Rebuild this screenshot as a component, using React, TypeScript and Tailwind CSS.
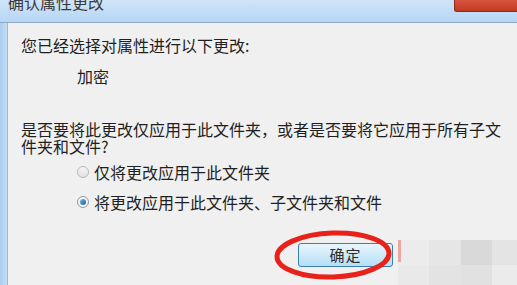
export default function App() {
  return (
    <div
      className="relative w-[517px] h-[285px] overflow-hidden bg-[#f0f0f0] text-[#1f1f1f]"
      style={{ fontFamily: '"Noto Sans CJK SC", "Noto Sans", sans-serif' }}
    >
      {/* Title bar */}
      <div className="relative h-[23px] bg-gradient-to-b from-[#cfe4f8] to-[#b7d6f6] border-b border-[#8faac6] overflow-hidden">
        <div className="pl-[8px] -mt-[9px] text-[16px] leading-[22px] text-[#3a3a3a] whitespace-nowrap">确认属性更改</div>
        <div className="absolute right-0 top-0 w-[63px] h-[12px] rounded-bl-[3px] bg-gradient-to-b from-[#d8543f] to-[#c23a22] border-l border-b border-[#8a2a1c]" />
      </div>

      {/* Window body */}
      <div className="flex h-[262px]">
        <div className="w-[8px] h-full bg-gradient-to-r from-[#a9cbef] to-[#c7def5] border-r border-[#9fb6cf]" />
        <div className="flex-1 pl-[13px] pt-[12px] text-[16px] leading-[20px]">
          <div className="whitespace-nowrap">您已经选择对属性进行以下更改:</div>
          <div className="mt-[11px] pl-[56px]">加密</div>

          <div className="mt-[35px] leading-[17px] whitespace-nowrap">
            <div>是否要将此更改仅应用于此文件夹，或者是否要将它应用于所有子文</div>
            <div>件夹和文件?</div>
          </div>

          <div className="mt-[7px] pl-[56px] flex flex-col gap-[10px]">
            <div className="flex items-center gap-[5px]">
              <span className="w-[12px] h-[12px] rounded-full border border-[#b8b8b8] bg-gradient-to-b from-[#f4f4f4] to-[#e2e2e2]" />
              <span>仅将更改应用于此文件夹</span>
            </div>
            <div className="flex items-center gap-[5px]">
              <span className="w-[12px] h-[12px] rounded-full border border-[#8d9aa6] bg-[#f6f6f6] flex items-center justify-center">
                <span className="w-[6px] h-[6px] rounded-full bg-gradient-to-br from-[#6cc0ec] to-[#1b5d8f]" />
              </span>
              <span>将更改应用于此文件夹、子文件夹和文件</span>
            </div>
          </div>

          <div className="mt-[31px] flex">
            <div className="ml-[277px] w-[95px] h-[24px] border border-[#3c7fb1] rounded-[3px] bg-gradient-to-b from-[#eaf6fd] to-[#b4def8] flex items-center justify-center text-[15px] text-[#2b2b2b] tracking-[1px]">
              确定
            </div>
          </div>
        </div>
      </div>

      {/* Blurred region */}
      <div className="absolute left-[398px] top-[240px] w-[125px] h-[50px] rounded-[6px] bg-[#eaeaea] grid grid-cols-4 grid-rows-2 overflow-hidden">
        <div className="bg-[#ececec]" />
        <div className="bg-[#e6e6e6]" />
        <div className="bg-[#d9d9d9]" />
        <div className="bg-[#e4e4e4]" />
        <div className="bg-[#e9e9e9]" />
        <div className="bg-[#e3e3e3]" />
        <div className="bg-[#e1e1e1]" />
        <div className="bg-[#ebebeb]" />
      </div>
      <div className="absolute left-[398px] top-[240px] w-[3px] h-[22px] bg-[#e8a8a0]" />

      {/* Red highlight ellipse */}
      <svg className="absolute left-[272px] top-[227px]" width="124" height="56" viewBox="0 0 124 56">
        <ellipse cx="61" cy="28" rx="56" ry="22" fill="none" stroke="#e8221a" strokeWidth="5" transform="rotate(-2 61 28)" />
      </svg>
    </div>
  );
}
